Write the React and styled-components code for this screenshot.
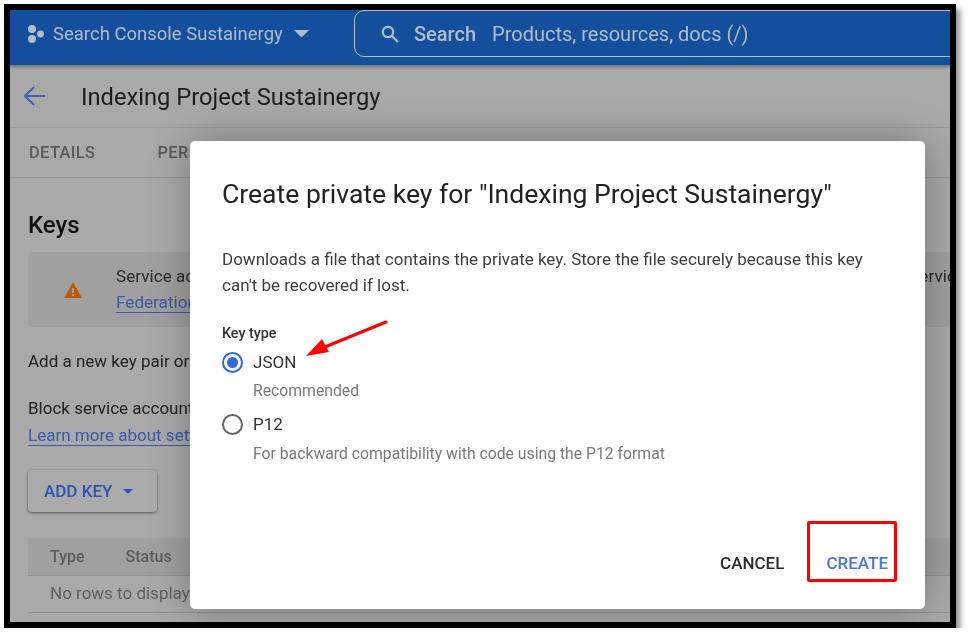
import styled, { createGlobalStyle } from "styled-components";

const Global = createGlobalStyle`
  html, body { margin: 0; padding: 0; background: #fff; }
  body { font-family: Roboto, "Liberation Sans", sans-serif; }
  svg { flex-shrink: 0; }
`;

const Frame = styled.div`
  position: relative;
  box-sizing: border-box;
  width: 952px;
  height: 624px;
  margin: 4px 0 0 4px;
  border: 6px solid #000;
  box-shadow: 4px 5px 6px rgba(0, 0, 0, 0.45);
  overflow: hidden;
  background: #a9a9a9;
  filter: blur(0.35px);
`;

const TopBar = styled.header`
  height: 55px;
  background: #134f9d;
  display: flex;
  align-items: flex-start;
  box-shadow: 0 2px 3px rgba(0, 0, 0, 0.35);
  position: relative;
  color: #b3bdc9;
`;

const Project = styled.div`
  display: flex;
  align-items: center;
  height: 47px;
  padding-left: 17px;
  width: 327px;
  font-size: 18.5px;
`;

const ProjectName = styled.span`
  margin: 0 11px 0 8px;
`;

const SearchBox = styled.div`
  flex: 1;
  height: 45px;
  margin-right: -20px;
  border: 1px solid #b3bdc9;
  border-radius: 10px;
  display: flex;
  align-items: center;
  padding-left: 26px;
  font-size: 20px;
`;

const SearchLabel = styled.span`
  font-weight: 500;
  margin: 0 16px 0 15px;
`;

const TitleBar = styled.div`
  height: 62px;
  display: flex;
  align-items: center;
  padding-left: 13px;
  border-bottom: 1px solid #979797;
`;

const PageTitle = styled.h1`
  margin: 2px 0 0 36px;
  font-size: 23.7px;
  font-weight: 400;
  color: #1c1c1c;
`;

const Tabs = styled.nav`
  height: 49px;
  display: flex;
  align-items: center;
  padding-left: 19px;
  gap: 62px;
  border-bottom: 1px solid #979797;
`;

const Tab = styled.span`
  font-size: 16.4px;
  font-weight: 500;
  letter-spacing: 0.4px;
  color: #5a5a5a;
`;

const Body = styled.main`
  padding: 32px 0 0 18px;
`;

const SectionTitle = styled.h2`
  margin: 0;
  font-size: 24px;
  line-height: 30px;
  font-weight: 500;
  color: #111;
`;

const Banner = styled.div`
  height: 75px;
  margin-top: 12px;
  background: #a0a0a0;
  border-radius: 4px;
  display: flex;
  align-items: center;
  padding-left: 36px;
  gap: 34px;
  white-space: nowrap;
`;

const BannerText = styled.div`
  font-size: 17px;
  line-height: 26px;
  letter-spacing: 0.07px;
  margin-bottom: 2px;
  color: #2a2a2a;
`;

const Link = styled.a`
  color: #3a5aa8;
  border-bottom: 1px solid #3a5aa8;
`;

const Para = styled.p`
  margin: ${(p) => p.$top}px 0 0;
  font-size: 17px;
  line-height: 26px;
  color: #222;
  white-space: nowrap;
`;

const AddKey = styled.button`
  display: flex;
  align-items: center;
  gap: 11px;
  width: 129px;
  height: 42px;
  margin-top: 22px;
  padding: 0 0 0 16px;
  border: 0;
  border-radius: 4px;
  background: #ababab;
  box-shadow: 0 1px 3px rgba(0, 0, 0, 0.5);
  font: 500 17px Roboto, sans-serif;
  color: #2f53ad;
`;

const TableHead = styled.div`
  height: 37px;
  margin-top: 26px;
  background: #a0a0a0;
  border-bottom: 1px solid #909090;
  display: flex;
  align-items: center;
  padding-left: 22px;
  gap: 41px;
  font-size: 16px;
  font-weight: 500;
  color: #5c5c5c;
`;

const EmptyRow = styled.div`
  height: 37px;
  display: flex;
  align-items: center;
  padding: 0 0 2px 22px;
  box-sizing: border-box;
  border-bottom: 1px solid #909090;
  font-size: 17px;
  color: #5f5f5f;
`;

const Dialog = styled.section`
  position: absolute;
  left: 180px;
  top: 131px;
  box-sizing: border-box;
  width: 735px;
  height: 468px;
  padding: 36px 32px 0;
  background: #fff;
  border-radius: 5px;
  box-shadow: 0 0 40px rgba(0, 0, 0, 0.3);
`;

const DialogTitle = styled.h2`
  margin: 0;
  font-size: 26.55px;
  line-height: 34px;
  font-weight: 400;
  color: #222;
`;

const DialogText = styled.p`
  margin: 35px 0 0;
  font-size: 17px;
  line-height: 26px;
  color: #3e3e3e;
`;

const FieldLabel = styled.div`
  margin-top: 26px;
  font-size: 14.3px;
  line-height: 18px;
  font-weight: 500;
  color: #333;
`;

const Option = styled.label`
  display: flex;
  align-items: center;
  gap: 10px;
  height: 24px;
  margin-top: ${(p) => p.$top}px;
  font-size: 17px;
  color: #333;
`;

const RadioMark = styled.span`
  box-sizing: border-box;
  width: 21px;
  height: 21px;
  border-radius: 50%;
  border: 2px solid ${(p) => (p.$on ? "#3367d6" : "#666")};
  display: flex;
  align-items: center;
  justify-content: center;
  &::after {
    content: "";
    display: ${(p) => (p.$on ? "block" : "none")};
    width: 11px;
    height: 11px;
    border-radius: 50%;
    background: #3367d6;
  }
`;

const Hint = styled.div`
  margin: ${(p) => p.$top}px 0 0 31px;
  font-size: 15.75px;
  line-height: 20px;
  color: #7a7a7a;
`;

const Actions = styled.div`
  position: absolute;
  right: 37px;
  bottom: 36px;
  display: flex;
  gap: 42px;
  font-size: 17px;
  font-weight: 500;
  line-height: 20px;
`;

const Action = styled.span`
  color: ${(p) => p.$color};
`;

const RedBox = styled.div`
  position: absolute;
  left: 617px;
  top: 380px;
  box-sizing: border-box;
  width: 90px;
  height: 61px;
  border: 3px solid #f00;
  border-radius: 2px;
`;

const RedArrow = styled.svg`
  position: absolute;
  left: 110px;
  top: 178px;
`;

const HubDots = () => (
  <svg width="18" height="18" viewBox="0 0 18 18" fill="#b3bdc9">
    <circle cx="5" cy="4" r="4" />
    <circle cx="5" cy="14" r="4" />
    <circle cx="13.5" cy="9" r="3.4" />
  </svg>
);

const Caret = ({ w = 15, color = "#b3bdc9" }) => (
  <svg width={w} height={w / 2} viewBox="0 0 10 5" fill={color}>
    <path d="M0 0h10L5 5z" />
  </svg>
);

const SearchIcon = () => (
  <svg width="18" height="18" viewBox="0 0 18 18" fill="none" stroke="#b3bdc9" strokeWidth="2.2">
    <circle cx="7" cy="7" r="5.2" />
    <path d="M11 11l6 6" />
  </svg>
);

const BackArrow = () => (
  <svg width="22" height="20" viewBox="0 0 22 20" fill="none" stroke="#3c62b0" strokeWidth="2.2">
    <path d="M22 10H2M11 1l-9 9 9 9" />
  </svg>
);

const WarnIcon = () => (
  <svg width="18" height="16" viewBox="0 0 18 16">
    <path d="M9 0l9 16H0z" fill="#b85c0c" />
    <path d="M8 6h2v5H8zM8 12h2v2H8z" fill="#a0a0a0" />
  </svg>
);

export default function App() {
  return (
    <>
      <Global />
      <Frame>
        <TopBar>
          <Project>
            <HubDots />
            <ProjectName>Search Console Sustainergy</ProjectName>
            <Caret />
          </Project>
          <SearchBox>
            <SearchIcon />
            <SearchLabel>Search</SearchLabel>
            Products, resources, docs (/)
          </SearchBox>
        </TopBar>
        <TitleBar>
          <BackArrow />
          <PageTitle>Indexing Project Sustainergy</PageTitle>
        </TitleBar>
        <Tabs>
          <Tab>DETAILS</Tab>
          <Tab>PERMISSIONS</Tab>
        </Tabs>
        <Body>
          <SectionTitle>Keys</SectionTitle>
          <Banner>
            <WarnIcon />
            <BannerText>
              Service account keys could pose a security risk if compromised. We recommend you avoid downloading service
              <br />
              <Link>Federation</Link>
            </BannerText>
          </Banner>
          <Para $top={21}>Add a new key pair or upload a public key certificate from an existing key pair.</Para>
          <Para $top={21}>Block service account key creation using organization policies.</Para>
          <Para $top={1}>
            <Link>Learn more about setting organization policies for service accounts</Link>
          </Para>
          <AddKey>
            ADD KEY
            <Caret w={10} color="#2f53ad" />
          </AddKey>
          <TableHead>
            <span>Type</span>
            <span>Status</span>
          </TableHead>
          <EmptyRow>No rows to display</EmptyRow>
        </Body>
        <Dialog>
          <DialogTitle>Create private key for "Indexing Project Sustainergy"</DialogTitle>
          <DialogText>
            Downloads a file that contains the private key. Store the file securely because this key
            <br />
            can't be recovered if lost.
          </DialogText>
          <FieldLabel>Key type</FieldLabel>
          <Option $top={8}>
            <RadioMark $on />
            JSON
          </Option>
          <Hint $top={7}>Recommended</Hint>
          <Option $top={11}>
            <RadioMark />
            P12
          </Option>
          <Hint $top={8}>For backward compatibility with code using the P12 format</Hint>
          <Actions>
            <Action $color="#2b2b2b">CANCEL</Action>
            <Action $color="#4a76d8">CREATE</Action>
          </Actions>
          <RedBox />
          <RedArrow width="90" height="45" viewBox="0 0 90 45">
            <path d="M86 3L20 30" stroke="#f00" strokeWidth="3" strokeLinecap="round" />
            <path d="M6 37L22 20L29 33z" fill="#f00" />
          </RedArrow>
        </Dialog>
      </Frame>
    </>
  );
}
